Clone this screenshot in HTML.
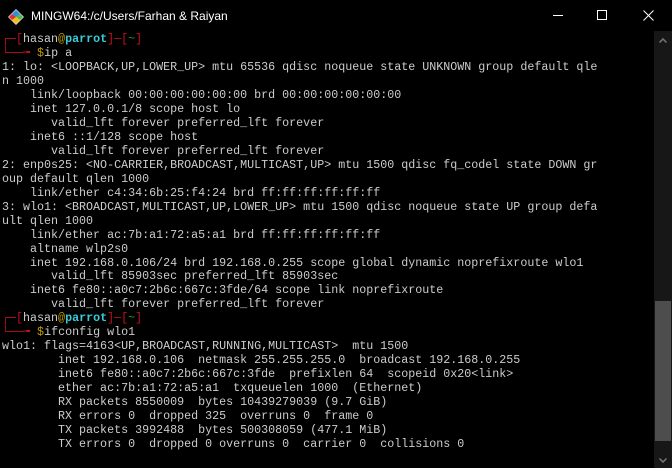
<!DOCTYPE html>
<html><head><meta charset="utf-8"><style>
html,body{margin:0;padding:0;background:#000;width:672px;height:468px;overflow:hidden}
#title{position:absolute;left:0;top:0;width:672px;height:31px;background:#000;color:#fff;font:12px "Liberation Sans",sans-serif}
#title .t{position:absolute;left:31px;top:9px}
#sb{position:absolute;left:654px;top:31px;width:18px;height:437px;background:#171717}
#thumb{position:absolute;left:1px;top:270px;width:16px;height:140px;background:#4d4d4d}
pre{position:absolute;left:2px;top:33px;margin:0;font:11.68px/13.97px "Liberation Mono",monospace;color:#cccccc;white-space:pre}
.r{color:#c50f1f}.y{color:#c19c00}.c{color:#3acbd6;font-weight:bold}.g{color:#13a10e}
</style></head><body>
<div id="title">
<svg style="position:absolute;left:8px;top:9px" width="16" height="16" viewBox="0 0 16 16">
<polygon points="8,0 16,8 8,16 0,8" fill="#e0e0e0"/>
<polygon points="8,1 12,5 8,8 4,5" fill="#2f8fdf"/>
<polygon points="12,5 15,8 12,11 8,8" fill="#58b848"/>
<polygon points="4,11 8,8 12,11 8,15" fill="#f2c010"/>
<polygon points="1,8 4,5 8,8 4,11" fill="#e03030"/>
</svg>
<span class="t">MINGW64:/c/Users/Farhan &amp; Raiyan</span>
<div style="position:absolute;left:553px;top:15px;width:10px;height:1px;background:#fff"></div>
<div style="position:absolute;left:597px;top:10px;width:8px;height:8px;border:1px solid #fff"></div>
<svg style="position:absolute;left:643px;top:10px" width="11" height="11"><path d="M0.5 0.5L10.5 10.5M10.5 0.5L0.5 10.5" stroke="#fff" stroke-width="1"/></svg>
</div>
<div id="sb"><div id="thumb"></div>
<svg style="position:absolute;left:5px;top:7px" width="8" height="5"><path d="M0.5 4.5L4 1L7.5 4.5" stroke="#777" fill="none" stroke-width="1.5"/></svg>
<svg style="position:absolute;left:5px;top:427px" width="8" height="5"><path d="M0.5 0.5L4 4L7.5 0.5" stroke="#777" fill="none" stroke-width="1.5"/></svg>
</div>
<pre><span class="r">┌─[</span>hasan<span class="y">@</span><span class="c">parrot</span><span class="r">]─[</span><span class="g">~</span><span class="r">]</span>
<span class="r">└──╼ </span><span class="y">$</span>ip a
1: lo: &lt;LOOPBACK,UP,LOWER_UP&gt; mtu 65536 qdisc noqueue state UNKNOWN group default qle
n 1000
    link/loopback 00:00:00:00:00:00 brd 00:00:00:00:00:00
    inet 127.0.0.1/8 scope host lo
       valid_lft forever preferred_lft forever
    inet6 ::1/128 scope host
       valid_lft forever preferred_lft forever
2: enp0s25: &lt;NO-CARRIER,BROADCAST,MULTICAST,UP&gt; mtu 1500 qdisc fq_codel state DOWN gr
oup default qlen 1000
    link/ether c4:34:6b:25:f4:24 brd ff:ff:ff:ff:ff:ff
3: wlo1: &lt;BROADCAST,MULTICAST,UP,LOWER_UP&gt; mtu 1500 qdisc noqueue state UP group defa
ult qlen 1000
    link/ether ac:7b:a1:72:a5:a1 brd ff:ff:ff:ff:ff:ff
    altname wlp2s0
    inet 192.168.0.106/24 brd 192.168.0.255 scope global dynamic noprefixroute wlo1
       valid_lft 85903sec preferred_lft 85903sec
    inet6 fe80::a0c7:2b6c:667c:3fde/64 scope link noprefixroute
       valid_lft forever preferred_lft forever
<span class="r">┌─[</span>hasan<span class="y">@</span><span class="c">parrot</span><span class="r">]─[</span><span class="g">~</span><span class="r">]</span>
<span class="r">└──╼ </span><span class="y">$</span>ifconfig wlo1
wlo1: flags=4163&lt;UP,BROADCAST,RUNNING,MULTICAST&gt;  mtu 1500
        inet 192.168.0.106  netmask 255.255.255.0  broadcast 192.168.0.255
        inet6 fe80::a0c7:2b6c:667c:3fde  prefixlen 64  scopeid 0x20&lt;link&gt;
        ether ac:7b:a1:72:a5:a1  txqueuelen 1000  (Ethernet)
        RX packets 8550009  bytes 10439279039 (9.7 GiB)
        RX errors 0  dropped 325  overruns 0  frame 0
        TX packets 3992488  bytes 500308059 (477.1 MiB)
        TX errors 0  dropped 0 overruns 0  carrier 0  collisions 0</pre>
</body></html>
